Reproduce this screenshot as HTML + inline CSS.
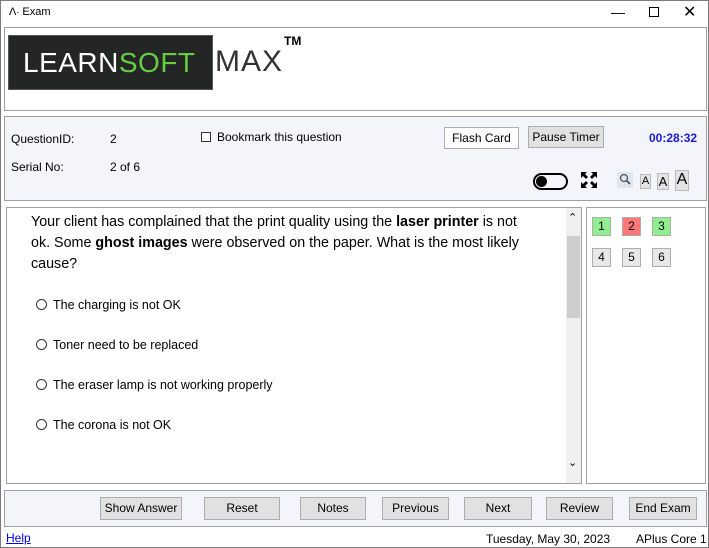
<!DOCTYPE html><html><head><style>
*{margin:0;padding:0;box-sizing:border-box}
body{width:709px;height:548px;position:relative;background:#fff;font-family:"Liberation Sans",sans-serif;font-size:12px;color:#000;overflow:hidden;border:1px solid #7a7a7a}
.a{position:absolute}
.btn{position:absolute;background:#e1e1e1;border:1px solid #adadad;font-size:12px;text-align:center;line-height:20px}
.q{position:absolute;width:19px;height:19px;border:1px solid #adadad;background:#e8e8e8;text-align:center;line-height:17px;font-size:12px}
.opt{position:absolute;left:35px;font-size:12.5px}
.opt:before{content:"";display:inline-block;width:9px;height:9px;border:1px solid #333;border-radius:50%;margin-right:6px;vertical-align:-1px}
</style></head><body>
<div class="a" style="left:8px;top:5px;font-size:11px">&#923;<span style="font-size:9px">·</span> Exam</div>
<div class="a" style="left:610px;top:3px;font-size:14px">&#8212;</div>
<div class="a" style="left:648px;top:6px;width:10px;height:10px;border:1px solid #000"></div>
<div class="a" style="left:682px;top:1px;font-size:16px">&#10005;</div>
<div class="a" style="left:3px;top:26px;width:703px;height:84px;border:1px solid #a0a0a0"></div>
<div class="a" style="left:7px;top:34px;width:205px;height:55px;background:#232624;border:1px solid #555;color:#fff;font-size:28px;line-height:53px;padding-left:14px;letter-spacing:0.5px">LEARN<span style="color:#66cc44">SOFT</span></div>
<div class="a" style="left:214px;top:44px;font-size:30px;color:#333;letter-spacing:1px;font-weight:300">MAX</div>
<div class="a" style="left:283px;top:33px;font-size:12px;font-weight:bold">TM</div>
<div class="a" style="left:3px;top:115px;width:703px;height:85px;border:1px solid #a0a0a0;background:#f4f5fb"></div>
<div class="a" style="left:10px;top:131px">QuestionID:</div><div class="a" style="left:109px;top:131px">2</div>
<div class="a" style="left:10px;top:159px">Serial No:</div><div class="a" style="left:109px;top:159px">2 of 6</div>
<div class="a" style="left:200px;top:131px;width:10px;height:10px;border:1px solid #333;background:#fff"></div>
<div class="a" style="left:216px;top:129px">Bookmark this question</div>
<div class="btn" style="left:443px;top:126px;width:75px;height:22px;background:#fdfdfd">Flash Card</div>
<div class="btn" style="left:527px;top:125px;width:76px;height:22px">Pause Timer</div>
<div class="a" style="left:648px;top:130px;color:#1a1ad0;font-weight:bold">00:28:32</div>
<div class="a" style="left:532px;top:172px;width:35px;height:17px;border:2px solid #000;border-radius:9px"><div style="position:absolute;left:1px;top:1px;width:11px;height:11px;border-radius:50%;background:#000"></div></div>
<svg class="a" style="left:580px;top:171px" width="16" height="16" viewBox="0 0 16 16" fill="#000"><path d="M0 0h6L4 2l3 3-2 2-3-3-2 2z"/><path d="M16 0v6l-2-2-3 3-2-2 3-3-2-2z"/><path d="M0 16v-6l2 2 3-3 2 2-3 3 2 2z"/><path d="M16 16h-6l2-2-3-3 2-2 3 3 2-2z"/></svg>
<div class="a" style="left:616px;top:171px;width:16px;height:16px;background:#dde6f2"><svg width="16" height="16"><circle cx="7" cy="6" r="3.5" fill="none" stroke="#555" stroke-width="1.3"/><path d="M9.5 8.5l3.5 3.5" stroke="#555" stroke-width="1.8"/></svg></div>
<div class="a" style="left:639px;top:173px;width:11px;height:15px;background:#e3e3e3;border:1px solid #bbb;font-size:11px;text-align:center">A</div>
<div class="a" style="left:656px;top:172px;width:12px;height:17px;background:#e3e3e3;border:1px solid #bbb;font-size:13px;text-align:center">A</div>
<div class="a" style="left:674px;top:169px;width:14px;height:21px;background:#e3e3e3;border:1px solid #bbb;font-size:16px;text-align:center">A</div>
<div class="a" style="left:5px;top:206px;width:576px;height:277px;border:1px solid #a0a0a0"></div>
<div class="a" style="left:565px;top:207px;width:15px;height:275px;background:#f0f0f0"></div>
<div class="a" style="left:566px;top:235px;width:13px;height:82px;background:#cdcdcd"></div>
<div class="a" style="left:567px;top:210px;font-size:11px">&#8963;</div>
<div class="a" style="left:567px;top:455px;font-size:11px">&#8964;</div>
<div class="a" style="left:30px;top:211px;width:505px;font-size:14.3px;line-height:21px">Your client has complained that the print quality using the <b>laser printer</b> is not ok. Some <b>ghost images</b> were observed on the paper. What is the most likely cause?</div>
<div class="opt" style="top:297px">The charging is not OK</div>
<div class="opt" style="top:337px">Toner need to be replaced</div>
<div class="opt" style="top:377px">The eraser lamp is not working properly</div>
<div class="opt" style="top:417px">The corona is not OK</div>
<div class="a" style="left:585px;top:206px;width:120px;height:277px;border:1px solid #a0a0a0"></div>
<div class="q" style="left:591px;top:216px;background:#90ee90">1</div>
<div class="q" style="left:621px;top:216px;background:#f77">2</div>
<div class="q" style="left:651px;top:216px;background:#90ee90">3</div>
<div class="q" style="left:591px;top:247px">4</div>
<div class="q" style="left:621px;top:247px">5</div>
<div class="q" style="left:651px;top:247px">6</div>
<div class="a" style="left:3px;top:489px;width:703px;height:37px;border:1px solid #a0a0a0;background:#f4f5fb"></div>
<div class="btn" style="left:99px;top:496px;width:82px;height:23px">Show Answer</div>
<div class="btn" style="left:203px;top:496px;width:76px;height:23px">Reset</div>
<div class="btn" style="left:299px;top:496px;width:66px;height:23px">Notes</div>
<div class="btn" style="left:381px;top:496px;width:67px;height:23px">Previous</div>
<div class="btn" style="left:463px;top:496px;width:68px;height:23px">Next</div>
<div class="btn" style="left:545px;top:496px;width:67px;height:23px">Review</div>
<div class="btn" style="left:628px;top:496px;width:68px;height:23px">End Exam</div>
<div class="a" style="left:5px;top:530px;color:#0000ee;text-decoration:underline">Help</div>
<div class="a" style="left:485px;top:531px">Tuesday, May 30, 2023</div>
<div class="a" style="left:635px;top:531px">APlus Core 1</div>
</body></html>
